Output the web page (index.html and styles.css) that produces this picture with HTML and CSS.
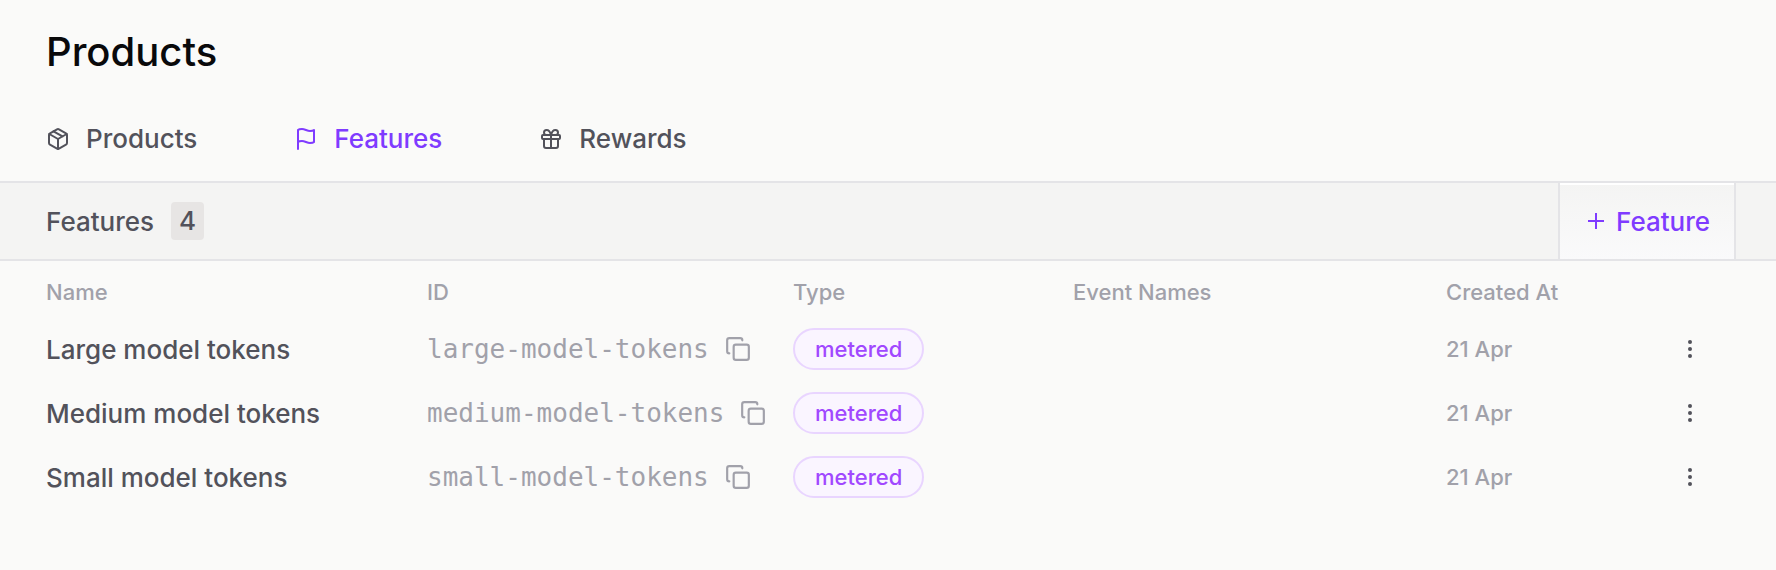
FILE: index.html
```html
<!DOCTYPE html>
<html lang="en">
<head>
<meta charset="utf-8">
<title>Products</title>
<meta name="viewport" content="width=device-width, initial-scale=1">
<link rel="stylesheet" href="styles.css">
</head>
<body>
<svg class="sprite" aria-hidden="true">
  <symbol id="copy" viewBox="0 0 24 24"><rect x="8" y="8" width="14" height="14" rx="2"/><path d="M4 16c-1.1 0-2-.9-2-2V4c0-1.100.9-2 2-2h10c1.100 0 2 .9 2 2"/></symbol>
  <symbol id="dots" viewBox="0 0 24 24"><circle cx="12" cy="5" r="2"/><circle cx="12" cy="12" r="2"/><circle cx="12" cy="19" r="2"/></symbol>
</svg>
<h1 class="title">Products</h1>
<nav class="tabs">
  <a class="tab" href="#products"><svg class="icon" viewBox="0 0 24 24"><path d="M11 21.730a2 2 0 0 0 2 0l7-4A2 2 0 0 0 21 16V8a2 2 0 0 0-1-1.730l-7-4a2 2 0 0 0-2 0l-7 4A2 2 0 0 0 3 8v8a2 2 0 0 0 1 1.730z"/><path d="M12 22V12M3.300 7 12 12l8.700-5M7.500 4.270l9 5.150"/></svg>Products</a>
  <a class="tab active" href="#features"><svg class="icon" viewBox="0 0 24 24"><path d="M4 15s1-1 4-1 5 2 8 2 4-1 4-1V3s-1 1-4 1-5-2-8-2-4 1-4 1zM4 22v-7"/></svg>Features</a>
  <a class="tab" href="#rewards"><svg class="icon" viewBox="0 0 24 24"><rect x="3" y="8" width="18" height="4" rx="1"/><path d="M12 8v13M19 12v7a2 2 0 0 1-2 2H7a2 2 0 0 1-2-2v-7M7.500 8a2.500 2.500 0 0 1 0-5A4.800 8 0 0 1 12 8a4.800 8 0 0 1 4.500-5 2.500 2.500 0 0 1 0 5"/></svg>Rewards</a>
</nav>
<section class="toolbar">
  <h2 class="heading">Features <span class="count">4</span></h2>
  <button class="add" type="button"><svg class="plus" viewBox="0 0 16 16"><path d="M8 0v16M0 8h16"/></svg>Feature</button>
</section>
<table class="features">
  <thead>
    <tr><th class="name">Name</th><th class="id">ID</th><th class="type">Type</th><th class="events">Event Names</th><th class="created">Created At</th><th class="actions" aria-label="Actions"></th></tr>
  </thead>
  <tbody>
    <tr><td class="label">Large model tokens</td><td><button class="copy" type="button">large-model-tokens<svg class="copy-icon"><use href="#copy"/></svg></button></td><td><span class="pill">metered</span></td><td></td><td class="date">21 Apr</td><td><button class="more" type="button" aria-label="More"><svg class="dots"><use href="#dots"/></svg></button></td></tr>
    <tr><td class="label">Medium model tokens</td><td><button class="copy" type="button">medium-model-tokens<svg class="copy-icon"><use href="#copy"/></svg></button></td><td><span class="pill">metered</span></td><td></td><td class="date">21 Apr</td><td><button class="more" type="button" aria-label="More"><svg class="dots"><use href="#dots"/></svg></button></td></tr>
    <tr><td class="label">Small model tokens</td><td><button class="copy" type="button">small-model-tokens<svg class="copy-icon"><use href="#copy"/></svg></button></td><td><span class="pill">metered</span></td><td></td><td class="date">21 Apr</td><td><button class="more" type="button" aria-label="More"><svg class="dots"><use href="#dots"/></svg></button></td></tr>
  </tbody>
</table>
</body>
</html>
```
FILE: styles.css
```css
* { box-sizing: border-box; }
body {
  margin: 0;
  background: #fafaf9;
  color: #52525b;
  font-family: Inter, "Liberation Sans", sans-serif;
  font-size: 26px;
  font-weight: 500;
}
button { border: 0; padding: 0; background: none; color: inherit; font: inherit; cursor: pointer; }
svg { fill: none; stroke: currentColor; stroke-width: 2; stroke-linecap: round; stroke-linejoin: round; flex: none; }
.sprite { display: none; }
.title { margin: 0; padding: 28px 46px 0; color: #09090b; font-size: 40px; line-height: 48px; font-weight: 500; }
.tabs { display: flex; gap: 97px; padding: 45px 46px 24px; }
.tab { display: flex; align-items: center; gap: 16px; line-height: 36px; color: inherit; text-decoration: none; }
.tab.active { color: #7f3bff; }
.icon { width: 24px; height: 24px; }
.toolbar {
  display: flex;
  justify-content: space-between;
  height: 80px;
  padding: 0 40px 0 46px;
  border: solid #e4e4e7;
  border-width: 2px 0;
  background: #f4f4f3;
}
.heading { display: flex; align-items: center; gap: 17px; margin: 0; font-size: 26px; font-weight: 500; }
.count { padding: 0 8px; border-radius: 4px; background: #e7e5e4; line-height: 38px; }
.add {
  display: flex;
  align-items: center;
  gap: 12px;
  padding: 0 24px 0 28px;
  border: solid #e4e4e7;
  border-width: 0 2px;
  background: linear-gradient(#f4f4f3, #fafafb);
  box-shadow: inset 0 2px #fff;
  color: #7f3bff;
}
.plus { width: 16px; height: 16px; overflow: visible; stroke-linecap: butt; }
.features { width: 100%; table-layout: fixed; border-collapse: collapse; text-align: left; }
th { height: 56px; padding: 6px 0 0; color: #a1a1aa; font-size: 22px; font-weight: 500; }
th:first-child, td:first-child { padding-left: 46px; }
td { height: 64px; padding: 0; white-space: nowrap; }
.name { width: 427px; }
.id { width: 366px; }
.type { width: 280px; }
.events { width: 373px; }
.created { width: 228px; }
.copy { display: flex; align-items: center; gap: 16px; color: #a1a1aa; font-family: "DejaVu Sans Mono", monospace; font-weight: 400; }
.copy-icon { width: 26px; height: 26px; }
.pill {
  display: inline-block;
  padding: 0 20px;
  border: 2px solid #e9d5ff;
  border-radius: 21px;
  background: #faf5ff;
  color: #a148ff;
  font-size: 22px;
  line-height: 38px;
  vertical-align: middle;
}
.date { color: #a1a1aa; font-size: 22px; }
.more { display: flex; padding: 4px; }
.dots { width: 24px; height: 24px; fill: currentColor; stroke: none; }
```
